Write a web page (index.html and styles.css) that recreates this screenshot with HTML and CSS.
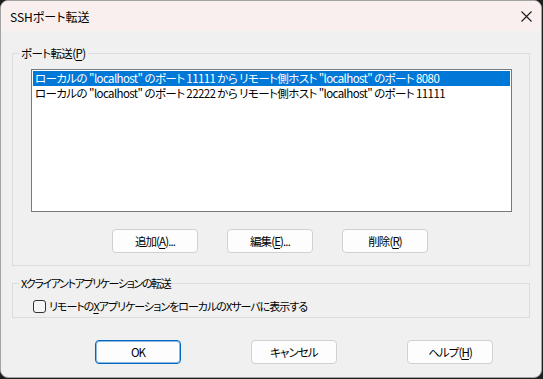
FILE: index.html
```html
<!DOCTYPE html>
<html lang="ja">
<head>
<meta charset="UTF-8" />
<title>SSHポート転送</title>
<link rel="stylesheet" href="styles.css">
</head>
<body>

<div class="window">
  <div class="titlebar">
    <span class="title">SSHポート転送</span>
    <span class="close">
      <svg width="11" height="11" viewBox="0 0 11 11"><path d="M0.5 0.5 L10.5 10.5 M10.5 0.5 L0.5 10.5" stroke="#1a1a1a" stroke-width="1.1" fill="none"/></svg>
    </span>
  </div>

  <div class="content">
    <fieldset class="group">
      <legend>ポート転送(<u>P</u>)</legend>
      <div class="list">
        <div class="row selected">ローカルの "localhost" のポート 11111 から リモート側ホスト "localhost" のポート 8080</div>
        <div class="row">ローカルの "localhost" のポート 22222 から リモート側ホスト "localhost" のポート 11111</div>
      </div>
      <div class="group-buttons">
        <button class="btn">追加(<u>A</u>)...</button>
        <button class="btn">編集(<u>E</u>)...</button>
        <button class="btn">削除(<u>R</u>)</button>
      </div>
    </fieldset>

    <fieldset class="group group-x">
      <legend class="kana">Xクライアントアプリケーションの転送</legend>
      <label class="check-row">
        <span class="checkbox"></span>
        <span class="kana">リモートの<u>X</u>アプリケーションをローカルのXサーバに表示する</span>
      </label>
    </fieldset>

    <div class="dialog-buttons">
      <button class="btn default">OK</button>
      <button class="btn">キャンセル</button>
      <button class="btn">ヘルプ(<u>H</u>)</button>
    </div>
  </div>
</div>

</body>
</html>
```

FILE: styles.css
```css
html, body {
  margin: 0;
  background: #1e1e1e;
}

.window {
  width: 542px;
  height: 378px;
  box-sizing: border-box;
  border: 1px solid #a3a3a3;
  border-radius: 8px;
  overflow: hidden;
  background: #f0f0f0;
  font-family: "Noto Sans CJK JP", sans-serif;
  font-size: 12px;
  font-feature-settings: "palt";
  color: #000;
}

.titlebar {
  height: 30px;
  background: #f9efee;
  display: flex;
  align-items: center;
  justify-content: space-between;
  padding: 0 8px 0 9px;
}

.close {
  display: flex;
  margin-right: 1px;
}

.content {
  padding: 14px 11px 0 11px;
}

.group {
  margin: 0;
  padding: 0 0 12px 0;
  border: 1px solid #dcdcdc;
  min-width: 0;
}

.group legend {
  margin-left: 6px;
  padding: 0 2px;
  line-height: 16px;
  font-size: 11.5px;
  letter-spacing: -0.6px;
}

.kana {
  font-size: 11px;
  letter-spacing: -1px;
}

.group legend.kana {
  font-size: 11px;
  letter-spacing: -1.4px;
}

u {
  text-decoration-thickness: 1px;
  text-underline-offset: 2px;
}

.list {
  margin: 8px 0 0 18px;
  width: 481px;
  height: 143px;
  box-sizing: border-box;
  border: 1px solid #7a7a7a;
  background: #fff;
  padding: 1px;
}

.row {
  height: 15px;
  line-height: 15px;
  padding-left: 2px;
  white-space: nowrap;
  font-size: 11.5px;
  letter-spacing: -0.6px;
}

.row.selected {
  background: #0078d7;
  color: #fff;
}

.group-buttons {
  display: flex;
  gap: 29px;
  margin: 17px 0 0 99px;
}

.btn {
  width: 86px;
  height: 24px;
  padding: 0;
  background: #fdfdfd;
  border: 1px solid #d0d0d0;
  border-radius: 4px;
  font-family: inherit;
  font-size: 11.5px;
  letter-spacing: -0.9px;
  font-feature-settings: "palt";
  color: #000;
}

.btn.default {
  border-color: #0067c0;
  box-shadow: inset 0 0 0 1px rgba(0, 103, 192, 0.45);
}

.group-x {
  margin-top: 9px;
  padding-bottom: 3px;
}

.check-row {
  display: flex;
  align-items: center;
  gap: 3px;
  height: 16px;
  margin: 7px 0 0 20px;
}

.checkbox {
  width: 11px;
  height: 11px;
  border: 1px solid #333;
  border-radius: 3px;
  background: #f6f6f6;
}

.dialog-buttons {
  display: flex;
  gap: 70px;
  margin: 22px 0 0 83px;
}
```
